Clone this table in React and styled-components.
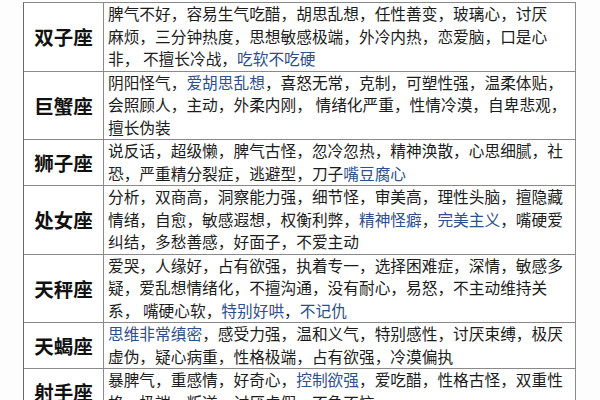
import styled, { createGlobalStyle } from "styled-components";

const Global = createGlobalStyle`
  html, body {
    margin: 0;
    padding: 0;
    background: #fdfdfd;
  }
  body {
    font-family: "Noto Sans CJK SC", "Noto Sans", sans-serif;
    overflow: hidden;
  }
`;

const Page = styled.div`
  width: 600px;
  height: 400px;
  overflow: hidden;
  padding: 2px 0 0 23px;
  box-sizing: border-box;
`;

const Table = styled.div`
  width: 551px;
  border-top: 1px solid #8a8a8a;
  border-left: 1.5px solid #6a6a6a;
  border-right: 1px solid #8a8a8a;
  background: #fff;
`;

const Row = styled.div`
  display: grid;
  grid-template-columns: 80px 1fr;
  border-bottom: 1px solid #8a8a8a;
`;

const Name = styled.div`
  display: flex;
  align-items: center;
  justify-content: center;
  border-right: 1px solid #8a8a8a;
  font-size: 19.5px;
  font-weight: 700;
  color: #111;
`;

const Desc = styled.div`
  padding: 0 0 0 4px;
  font-size: 15.7px;
  line-height: 22.5px;
  color: #1c1c1c;
`;

const Line = styled.div`
  white-space: pre;
`;

const Hl = styled.span`
  color: #2d4f8e;
`;

const rows = [
  {
    name: "双子座",
    lines: [
      ["脾气不好，容易生气吃醋，胡思乱想，任性善变，玻璃心，讨厌"],
      ["麻烦，三分钟热度，思想敏感极端，外冷内热，恋爱脑，口是心"],
      ["非， 不擅长冷战，", { b: "吃软不吃硬" }],
    ],
  },
  {
    name: "巨蟹座",
    lines: [
      ["阴阳怪气，", { b: "爱胡思乱想" }, "，喜怒无常，克制，可塑性强，温柔体贴，"],
      ["会照顾人，主动，外柔内刚， 情绪化严重，性情冷漠，自卑悲观，"],
      ["擅长伪装"],
    ],
  },
  {
    name: "狮子座",
    lines: [
      ["说反话，超级懒，脾气古怪，忽冷忽热，精神涣散，心思细腻，社"],
      ["恐，严重精分裂症，逃避型，刀子", { b: "嘴豆腐心" }],
    ],
  },
  {
    name: "处女座",
    lines: [
      ["分析，双商高，洞察能力强，细节怪，审美高，理性头脑，擅隐藏"],
      ["情绪，自愈，敏感遐想，权衡利弊，", { b: "精神怪癖" }, "，", { b: "完美主义" }, "，嘴硬爱"],
      ["纠结，多愁善感，好面子，不爱主动"],
    ],
  },
  {
    name: "天秤座",
    lines: [
      ["爱哭，人缘好，占有欲强，执着专一，选择困难症，深情，敏感多"],
      ["疑，爱乱想情绪化，不擅沟通，没有耐心，易怒，不主动维持关"],
      ["系， 嘴硬心软，", { b: "特别好哄" }, "，", { b: "不记仇" }],
    ],
  },
  {
    name: "天蝎座",
    lines: [
      [{ b: "思维非常缜密" }, "，感受力强，温和义气，特别感性，讨厌束缚，极厌"],
      ["虚伪，疑心病重，性格极端，占有欲强，冷漠偏执"],
    ],
  },
  {
    name: "射手座",
    lines: [
      ["暴脾气，重感情，好奇心，", { b: "控制欲强" }, "，爱吃醋，性格古怪，双重性"],
      ["格，极端，叛逆，讨厌虚假，不急不恼"],
    ],
  },
];

export default function App() {
  return (
    <>
      <Global />
      <Page>
        <Table>
          {rows.map((r) => (
            <Row key={r.name}>
              <Name>{r.name}</Name>
              <Desc>
                {r.lines.map((segs, i) => (
                  <Line key={i}>
                    {segs.map((s, j) =>
                      typeof s === "string" ? s : <Hl key={j}>{s.b}</Hl>
                    )}
                  </Line>
                ))}
              </Desc>
            </Row>
          ))}
        </Table>
      </Page>
    </>
  );
}
